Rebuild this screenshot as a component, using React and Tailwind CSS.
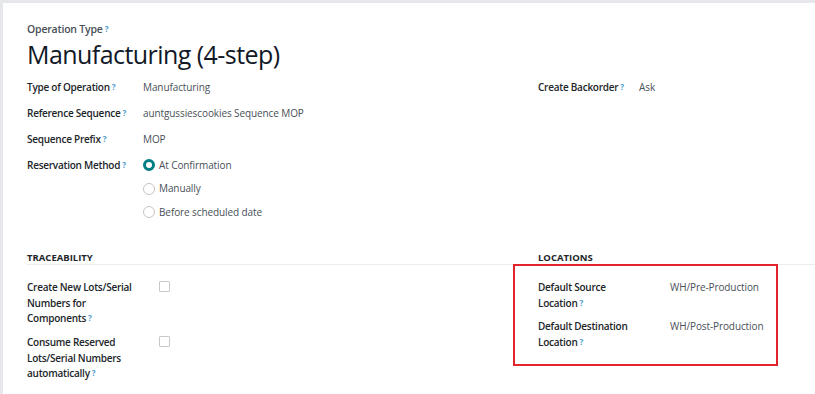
import React from 'react';

const Help = () => (
  <sup className="ml-[2px] text-[8px] font-bold text-[#4d9ccf] relative -top-[1px]">?</sup>
);

const Field = ({ label, children, labelW = 'w-[116px]', className = '' }) => (
  <div className={`flex items-start ${className}`}>
    <div className={`${labelW} shrink-0 font-semibold text-[#212529] tracking-[-0.25px]`}>{label}</div>
    <div className="text-[#495057] tracking-[-0.1px]">{children}</div>
  </div>
);

const Radio = ({ checked, label }) => (
  <div className="flex items-center h-[23.5px] gap-[4px]">
    {checked ? (
      <span className="w-[12px] h-[12px] rounded-full border-[3.5px] border-[#017e84] bg-white shrink-0" />
    ) : (
      <span className="w-[12px] h-[12px] rounded-full border border-[#c4c4c4] bg-white shrink-0" />
    )}
    <span className="text-[#495057] tracking-[-0.1px]">{label}</span>
  </div>
);

const Checkbox = () => (
  <span className="block w-[11px] h-[11px] border border-[#c8c8c8] rounded-[1px] bg-white mt-[1px]" />
);

export default function App() {
  return (
    <div
      className="w-[815px] h-[394px] bg-white border-t-[3px] border-l-[3px] border-[#e6e7ea] overflow-hidden text-[10px] leading-[15.5px]"
      style={{ fontFamily: '"Open Sans", "Noto Sans", sans-serif' }}
    >
      <div className="pl-[24px] pt-[19px]">
        <div className="font-semibold text-[#495057] text-[10.5px] tracking-[-0.2px]">
          Operation Type<Help />
        </div>
        <h1 className="text-[25px] leading-[32px] text-[#111827] font-normal tracking-[-0.55px]">Manufacturing (4-step)</h1>

        {/* main fields */}
        <div className="grid grid-cols-[511px_1fr] mt-[10px]">
          <div className="flex flex-col">
            <Field label={<>Type of Operation<Help /></>} className="h-[26px]">Manufacturing</Field>
            <Field label={<>Reference Sequence<Help /></>} className="h-[26px]">auntgussiescookies Sequence MOP</Field>
            <Field label={<>Sequence Prefix<Help /></>} className="h-[26px]">MOP</Field>
            <div className="flex items-start">
              <div className="w-[116px] shrink-0 font-semibold text-[#212529] tracking-[-0.25px]">
                Reservation Method<Help />
              </div>
              <div className="flex flex-col -mt-[4px]">
                <Radio checked label="At Confirmation" />
                <Radio label="Manually" />
                <Radio label="Before scheduled date" />
              </div>
            </div>
          </div>
          <div>
            <Field label={<>Create Backorder<Help /></>} labelW="w-[101px]" className="h-[26px]">Ask</Field>
          </div>
        </div>

        {/* traceability / locations */}
        <div className="mt-[27px]">
          <div className="grid grid-cols-[511px_1fr] border-b border-[#ececec] leading-[13px]">
            <div className="font-bold text-[9.5px] text-[#212529]">TRACEABILITY</div>
            <div className="font-bold text-[9.5px] text-[#212529]">LOCATIONS</div>
          </div>
          <div className="grid grid-cols-[486px_1fr]">
            <div className="flex flex-col pt-[15px] gap-[8.5px]">
              <div className="flex items-start">
                <div className="w-[132px] shrink-0 font-semibold text-[#212529] tracking-[-0.25px]">
                  Create New Lots/Serial<br />Numbers for<br />Components<Help />
                </div>
                <Checkbox />
              </div>
              <div className="flex items-start">
                <div className="w-[132px] shrink-0 font-semibold text-[#212529] tracking-[-0.25px]">
                  Consume Reserved<br />Lots/Serial Numbers<br />automatically<Help />
                </div>
                <Checkbox />
              </div>
            </div>
            <div className="w-[265px] h-[102px] -mt-[1px] border-2 border-[#e3242b] pl-[23px] pt-[14px] flex flex-col gap-[8px]">
              <div className="flex items-start">
                <div className="w-[132px] shrink-0 font-semibold text-[#212529] tracking-[-0.25px]">
                  Default Source<br />Location<Help />
                </div>
                <div className="text-[#495057] tracking-[-0.1px]">WH/Pre-Production</div>
              </div>
              <div className="flex items-start">
                <div className="w-[132px] shrink-0 font-semibold text-[#212529] tracking-[-0.25px]">
                  Default Destination<br />Location<Help />
                </div>
                <div className="text-[#495057] tracking-[-0.1px]">WH/Post-Production</div>
              </div>
            </div>
          </div>
        </div>
      </div>
    </div>
  );
}
